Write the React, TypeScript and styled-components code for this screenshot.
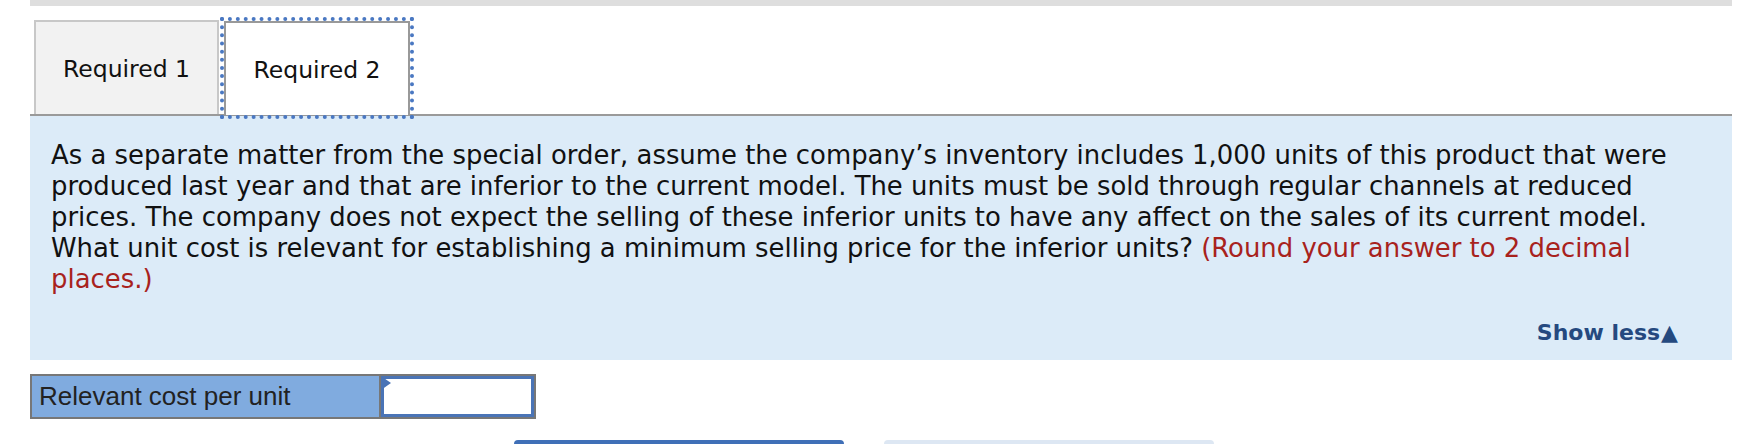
import React from 'react';
import styled, { createGlobalStyle } from 'styled-components';

const GlobalStyle = createGlobalStyle`
  body {
    margin: 0;
    background: #ffffff;
    font-family: "DejaVu Sans", Verdana, sans-serif;
    color: #111111;
  }
`;

const Page = styled.div`
  width: 1702px;
  margin-left: 30px;
`;

const TopBar = styled.div`
  height: 6px;
  background: #dedede;
`;

const TabRow = styled.div`
  display: flex;
  align-items: flex-end;
  margin-top: 14px;
  padding-left: 4px;
  gap: 5px;
  height: 94px;
`;

const Tab = styled.div<{ $active?: boolean }>`
  box-sizing: border-box;
  height: 94px;
  width: ${p => (p.$active ? '186px' : '185px')};
  display: flex;
  align-items: center;
  justify-content: center;
  padding-top: 2px;
  background: ${p => (p.$active ? '#ffffff' : '#f2f2f2')};
  border: 2px solid ${p => (p.$active ? '#999999' : '#c8c8c8')};
  border-bottom: none;
  outline: ${p => (p.$active ? '4px dotted #4a78c2' : 'none')};
  font-size: 23.5px;
  color: #111;
  position: relative;
  z-index: 1;
  margin-bottom: ${p => (p.$active ? '-1px' : '0')};
`;

const Panel = styled.div`
  background: #dcebf8;
  border-top: 2px solid #9a9a9a;
  padding: 24px 54px 15px 21px;
`;

const Question = styled.p`
  margin: 0;
  font-size: 25.9px;
  line-height: 31px;
  color: #111;
`;

const Hint = styled.span`
  color: #a8221d;
`;

const ShowLess = styled.div`
  margin-top: 26px;
  display: flex;
  justify-content: flex-end;
  align-items: center;
  gap: 1px;
  font-size: 22px;
  line-height: 24px;
  font-weight: bold;
  color: #25497f;
`;

const Triangle = styled.span`
  font-size: 22px;
`;

const AnswerRow = styled.div`
  display: flex;
  margin-top: 14px;
  height: 45px;
  width: 506px;
  box-sizing: border-box;
  border: 2px solid #777777;
`;

const LabelCell = styled.div`
  width: 349px;
  box-sizing: border-box;
  background: #80abdf;
  border-right: 2px solid #777777;
  display: flex;
  align-items: center;
  padding-left: 7px;
  font-family: "Liberation Sans", Arial, sans-serif;
  font-size: 26px;
  color: #222;
`;

const InputCell = styled.div`
  flex: 1;
  position: relative;
  box-sizing: border-box;
  border: 3px solid #4a74b6;
  background: #ffffff;
`;

const Marker = styled.span`
  position: absolute;
  top: -3px;
  left: -3px;
  width: 0;
  height: 0;
  border-top: 7px solid transparent;
  border-bottom: 7px solid transparent;
  border-left: 10px solid #4a74b6;
`;

const ButtonRow = styled.div`
  display: flex;
  gap: 40px;
  margin-top: 21px;
  margin-left: 484px;
`;

const NavButton = styled.div<{ $primary?: boolean }>`
  width: 330px;
  height: 40px;
  border-radius: 4px 4px 0 0;
  background: ${p => (p.$primary ? '#3f6fb7' : '#dde7f3')};
`;

export default function App() {
  return (
    <>
      <GlobalStyle />
      <Page>
        <TopBar />
        <TabRow>
          <Tab>Required 1</Tab>
          <Tab $active>Required 2</Tab>
        </TabRow>
        <Panel>
          <Question>
            As a separate matter from the special order, assume the company’s inventory includes 1,000 units of this product that were
            <br />
            produced last year and that are inferior to the current model. The units must be sold through regular channels at reduced
            <br />
            prices. The company does not expect the selling of these inferior units to have any affect on the sales of its current model.
            <br />
            What unit cost is relevant for establishing a minimum selling price for the inferior units? <Hint>(Round your answer to 2 decimal
            <br />
            places.)</Hint>
          </Question>
          <ShowLess>
            Show less<Triangle>▲</Triangle>
          </ShowLess>
        </Panel>
        <AnswerRow>
          <LabelCell>Relevant cost per unit</LabelCell>
          <InputCell>
            <Marker />
          </InputCell>
        </AnswerRow>
        <ButtonRow>
          <NavButton $primary />
          <NavButton />
        </ButtonRow>
      </Page>
    </>
  );
}
